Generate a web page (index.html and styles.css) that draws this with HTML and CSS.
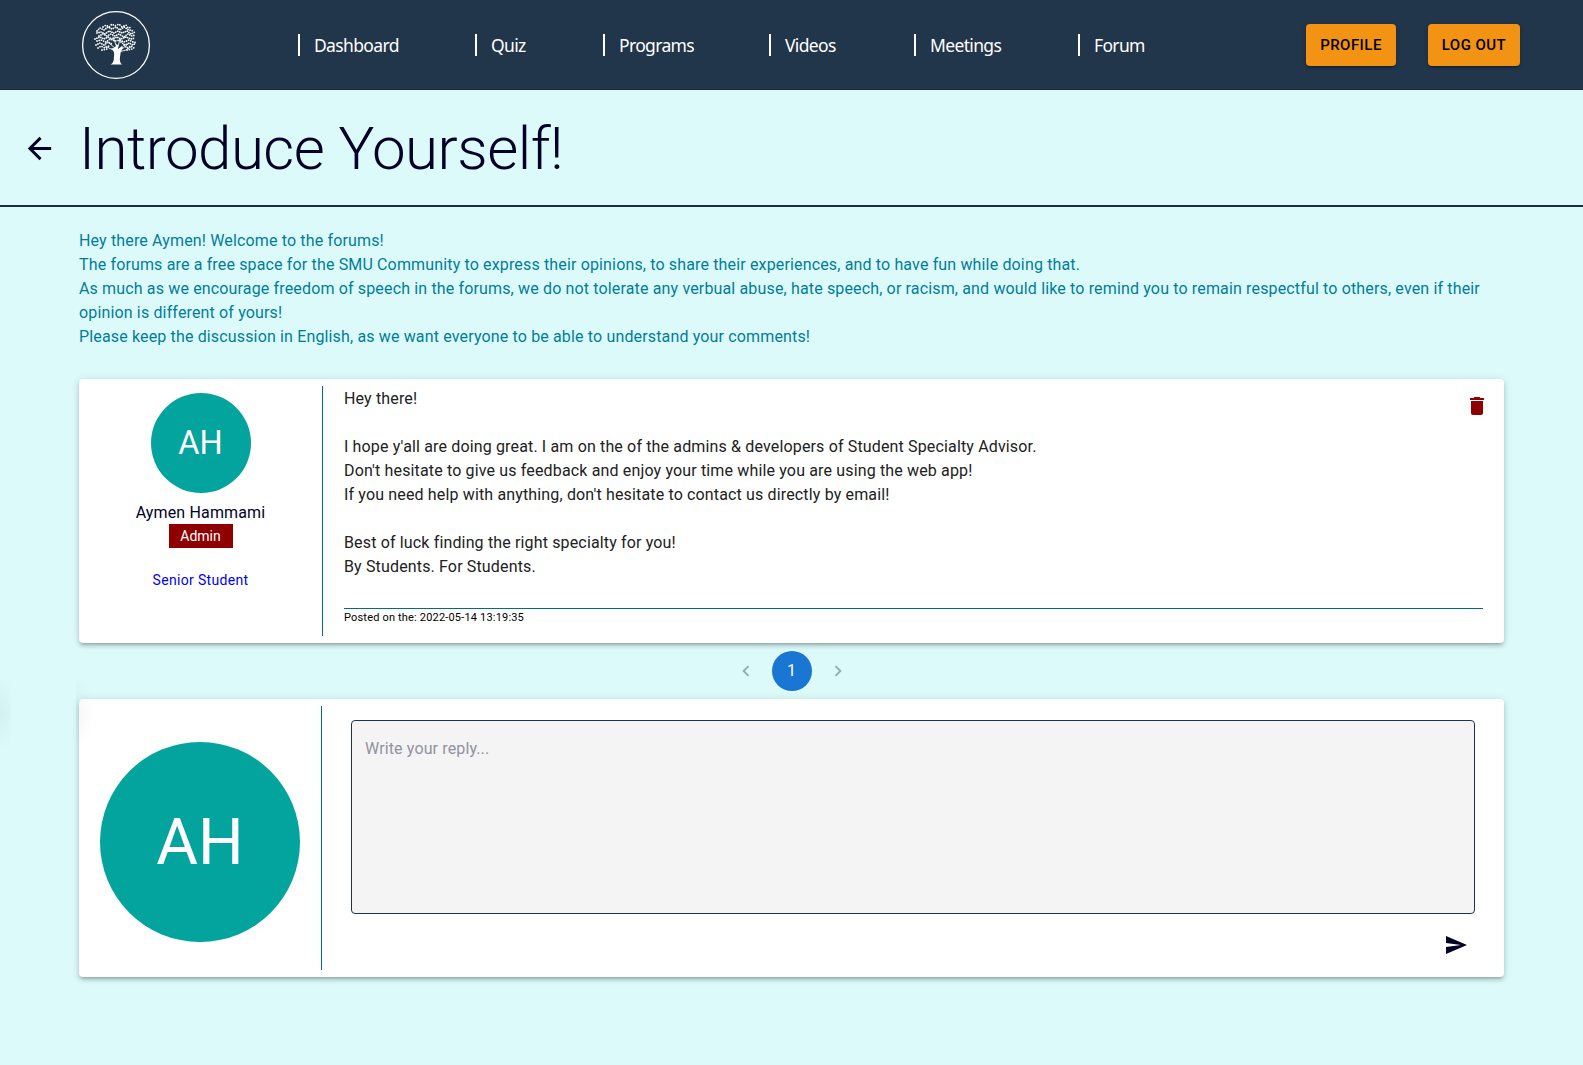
FILE: index.html
```html
<!DOCTYPE html>
<html lang="en">
<head>
<meta charset="utf-8">
<title>Introduce Yourself!</title>
<link rel="stylesheet" href="styles.css">
</head>
<body>
<header class="navbar">
  <svg class="logo" viewBox="0 0 70 70" fill="none" stroke="#fff" stroke-linecap="round">
    <circle cx="35" cy="35" r="33.4" stroke-width="1.3"/>
    <g class="leaves" stroke-width="1.8">
      <path stroke-dasharray="0 2.600" d="M22 17 25 15 28 17 31 14 34 16 38 14 41 17 45 15 47 18 51 17"/>
      <path stroke-dasharray="0 2.200" d="M16 21 19 18 23 20 27 17 31 19 35 17 39 20 43 17 48 20 53 21"/>
      <path stroke-dasharray="0 2.100" d="M16 23 20 22 24 24 28 21 33 23 37 21 41 23 46 21 50 24 54 22"/>
      <path stroke-dasharray="0 2.200" d="M18 26 22 24 26 26 30 24 34 26 38 24 43 27 47 24 51 26 54 25"/>
      <path stroke-dasharray="0 2.100" d="M14 29 19 27 23 29 27 27 31 29 36 27 40 29 45 27 50 29 54 28"/>
      <path stroke-dasharray="0 2.300" d="M16 31 20 30 25 32 29 29 34 31 39 30 43 32 48 30 52 32 56 33"/>
      <path stroke-dasharray="0 2.200" d="M15 35 19 33 23 35 27 32 31 34M40 32 44 35 48 33 52 35 55 33"/>
      <path stroke-dasharray="0 2.400" d="M17 38 20 36 24 38 28 36M43 35 46 38 50 36 53 38M21 40 26 39M46 40 51 39"/>
    </g>
    <path stroke-width=".9" d="M35 39 28 33M34 41 24 36M37 37 39 29M40 40 48 33M35 35 32 27M38 42Q45 41 50 37"/>
    <path fill="#fff" stroke="none" d="M30 38Q35 39 35 34L37 35V39L41 36 42 37Q39 42 39 47 38 52 41 54.600H29.500Q33 53 33 47 34 41 30 38Z"/>
  </svg>
  <nav class="links">
    <a>Dashboard</a><a>Quiz</a><a>Programs</a><a>Videos</a><a>Meetings</a><a>Forum</a>
  </nav>
  <div class="actions">
    <button class="btn profile">PROFILE</button>
    <button class="btn logout">LOG OUT</button>
  </div>
</header>
<div class="heading">
  <svg class="back" viewBox="0 0 24 24"><path d="M20 11H7.830l5.590-5.590L12 4l-8 8 8 8 1.410-1.410L7.830 13H20v-2z"/></svg>
  <h1>Introduce Yourself!</h1>
</div>
<main>
  <p class="intro">Hey there Aymen! Welcome to the forums!<br>
  The forums are a free space for the SMU Community to express their opinions, to share their experiences, and to have fun while doing that.<br>
  As much as we encourage freedom of speech in the forums, we do not tolerate any verbual abuse, hate speech, or racism, and would like to remind you to remain respectful to others, even if their opinion is different of yours!<br>
  Please keep the discussion in English, as we want everyone to be able to understand your comments!</p>
  <article class="card post">
    <div class="author">
      <div class="avatar">AH</div>
      <div class="name">Aymen Hammami</div>
      <div class="role">Admin</div>
      <div class="level">Senior Student</div>
    </div>
    <div class="content">
      <div class="message">
        <p>Hey there!<br><br>I hope y'all are doing great. I am on the of the admins &amp; developers of Student Specialty Advisor.<br>Don't hesitate to give us feedback and enjoy your time while you are using the web app!<br>If you need help with anything, don't hesitate to contact us directly by email!<br><br>Best of luck finding the right specialty for you!<br>By Students. For Students.</p>
        <svg class="trash" viewBox="0 0 24 24"><path d="M6 19c0 1.100.9 2 2 2h8c1.100 0 2-.9 2-2V7H6v12zM19 4h-3.500l-1-1h-5l-1 1H5v2h14V4z"/></svg>
      </div>
      <div class="posted">Posted on the: 2022-05-14 13:19:35</div>
    </div>
  </article>
  <div class="pagination">
    <svg viewBox="0 0 24 24"><path d="M15.410 7.410L14 6l-6 6 6 6 1.410-1.410L10.830 12z"/></svg>
    <span class="page">1</span>
    <svg viewBox="0 0 24 24"><path d="M10 6L8.590 7.410 13.170 12l-4.580 4.590L10 18l6-6z"/></svg>
  </div>
  <section class="card reply">
    <div class="me"><div class="avatar large">AH</div></div>
    <div class="editor">
      <textarea placeholder="Write your reply..."></textarea>
      <svg class="send" viewBox="0 0 24 24"><path d="M2.010 21L23 12 2.010 3 2 10l15 2-15 2z"/></svg>
    </div>
  </section>
</main>
<div class="edge-shadow"></div>
<div class="edge-shadow inner"></div>
</body>
</html>
```
FILE: styles.css
```css
* { box-sizing: border-box; }
body {
  margin: 0;
  min-height: 1065px;
  position: relative;
  background: #dcfafa;
  color: #000028;
  font: 16px/24px Roboto, sans-serif;
  letter-spacing: 0.00938em;
}
p, h1 { margin: 0; }
.navbar {
  height: 90px;
  padding: 0 63px 0 81px;
  display: flex;
  align-items: center;
  background: #21354b;
  border-bottom: 1px solid #1a2b42;
}
.logo { width: 70px; height: 70px; flex: none; }
.links {
  margin-left: 147px;
  display: grid;
  grid-template-columns: 177px 128px 166px 145px 164px auto;
}
.links a {
  height: 22px;
  padding-left: 14px;
  border-left: 2px solid #fff;
  color: #fff;
  font: 400 17.5px/22px "Noto Sans", sans-serif;
  letter-spacing: -0.65px;
}
.actions { margin-left: auto; display: flex; gap: 32px; }
.btn {
  height: 42px;
  padding: 0;
  border: 0;
  border-radius: 4px;
  background: #f39314;
  color: #000;
  font: 500 15px/26px Roboto, sans-serif;
  letter-spacing: 0.46px;
  box-shadow: 0 3px 1px -2px rgba(0,0,0,.2), 0 2px 2px rgba(0,0,0,.14), 0 1px 5px rgba(0,0,0,.12);
}
.profile { width: 90px; }
.logout { width: 92px; }
.heading {
  height: 117px;
  padding: 23px 22px 0;
  display: flex;
  align-items: flex-start;
  border-bottom: 2px solid #1a2f45;
}
.back { width: 35px; height: 35px; margin: 18px 22px 0 0; fill: #000028; }
h1 { font-size: 60px; line-height: 72px; font-weight: 300; letter-spacing: -0.00833em; }
main { padding: 22px 79px 0; }
.intro { color: #007d9c; }
.card {
  display: flex;
  background: #fff;
  border-radius: 4px;
  box-shadow: 0 3px 3px -2px rgba(0,0,0,.2), 0 3px 4px rgba(0,0,0,.14), 0 1px 8px rgba(0,0,0,.12);
}
.post { height: 264px; margin-top: 30px; padding: 7px 21px 7px 0; }
.author {
  width: 244px;
  padding-top: 7px;
  border-right: 1px solid #006c87;
  display: flex;
  flex-direction: column;
  align-items: center;
}
.avatar {
  width: 100px;
  height: 100px;
  border-radius: 50%;
  display: flex;
  align-items: center;
  justify-content: center;
  background: #03a39e;
  color: #fff;
  font-size: 32.5px;
  letter-spacing: 0;
}
.name { margin-top: 8px; }
.role { width: 64px; margin-top: -1px; background: #8f0000; color: #fff; font-size: 14px; letter-spacing: 0; text-align: center; }
.level { margin-top: 20px; color: #0000f5; font-size: 14px; letter-spacing: 0.33px; }
.content { flex: 1; padding-left: 21px; }
.message { height: 223px; padding-top: 1px; display: flex; justify-content: space-between; border-bottom: 1px solid #006c87; color: #212121; }
.trash { width: 24px; height: 24px; margin: 7px -6px 0 0; fill: #8f0000; }
.posted { color: #000; font-size: 11px; line-height: 18px; letter-spacing: 0.18px; }
.pagination { height: 56px; display: flex; align-items: center; justify-content: center; gap: 15px; }
.pagination svg { width: 22px; height: 22px; fill: #94a9ab; }
.page { width: 40px; height: 40px; border-radius: 50%; background: #1976d2; color: #fff; line-height: 40px; text-align: center; }
.reply { height: 278px; padding: 7px 29px 7px 0; }
.me { width: 243px; padding: 36px 0 0 21px; border-right: 1px solid #006c87; }
.large { width: 200px; height: 200px; padding-top: 1px; font-size: 64px; }
.editor { flex: 1; padding: 14px 0 0 29px; display: flex; flex-direction: column; align-items: flex-end; }
textarea {
  width: 100%;
  height: 194px;
  padding: 16px 13px;
  resize: none;
  background: #f4f4f4;
  border: 1px solid #1c344d;
  border-radius: 4px;
  font: 16px/24px Roboto, sans-serif;
  letter-spacing: 0;
}
textarea::placeholder { color: #9291a2; letter-spacing: 0.13px; }
.send { width: 24px; height: 24px; margin: 19px 7px 0 0; fill: #000028; }
.edge-shadow {
  position: absolute;
  left: 0;
  top: 675px;
  width: 11px;
  height: 75px;
  background: radial-gradient(ellipse 18px 38px at 0 50%, rgba(0,0,0,.035), transparent);
}
.inner { left: 76px; width: 16px; }
```
